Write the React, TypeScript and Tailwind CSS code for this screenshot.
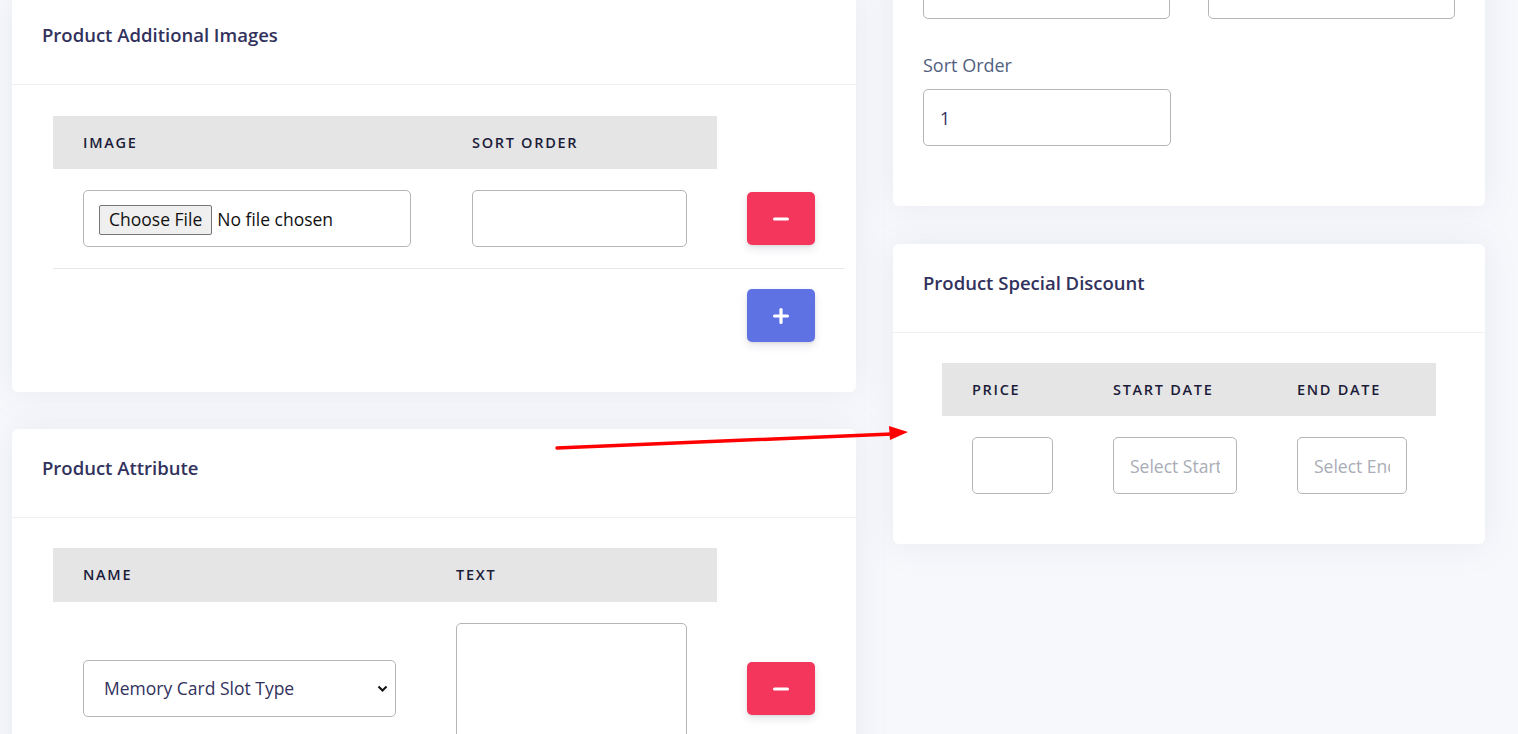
import { Minus, Plus } from 'lucide-react';

const inputCls =
  'block h-[57px] rounded-[5px] border border-[#b5b5b5] bg-white px-4 text-[17.5px] text-[#32325d] outline-none placeholder:text-[#a8adb6]';

function CardHeader({ title }: { title: string }) {
  return (
    <div className="border-b border-[#eef0f4] px-[30px] pt-[25px] pb-[35px]">
      <h3 className="text-[18.5px] leading-[28px] font-semibold text-[#32325d]">{title}</h3>
    </div>
  );
}

function Th({ children, gray = true, className = '' }: { children?: React.ReactNode; gray?: boolean; className?: string }) {
  return (
    <div
      className={`flex h-[53px] items-center pl-[30px] text-[14.5px] font-semibold uppercase tracking-[1.7px] text-[#1c1c3a] ${gray ? 'bg-[#e5e5e5]' : 'bg-white'} ${className}`}
    >
      {children}
    </div>
  );
}

function RemoveBtn() {
  return (
    <button className="flex h-[53px] w-[68px] items-center justify-center rounded-[5px] bg-[#f5365c] text-white shadow-[0_4px_8px_rgba(50,50,93,0.12),0_1px_3px_rgba(0,0,0,0.08)]">
      <Minus className="h-[22px] w-[22px]" strokeWidth={3.5} />
    </button>
  );
}

function AddBtn() {
  return (
    <button className="flex h-[53px] w-[68px] items-center justify-center rounded-[5px] bg-[#5e72e4] text-white shadow-[0_4px_8px_rgba(50,50,93,0.12),0_1px_3px_rgba(0,0,0,0.08)]">
      <Plus className="h-[22px] w-[22px]" strokeWidth={3.5} />
    </button>
  );
}

export default function App() {
  return (
    <div
      className="relative h-[734px] overflow-hidden bg-[#f7f8fc]"
      style={{ fontFamily: '"Open Sans", "Liberation Sans", sans-serif' }}
    >
      <div className="flex items-start gap-[37px] pl-[12px]">
        {/* left column */}
        <div className="-mt-[4px] flex w-[844px] flex-col gap-[37px]">
          <div className="rounded-[6px] bg-white shadow-[0_0_32px_0_rgba(136,152,170,0.15)]">
            <CardHeader title="Product Additional Images" />
            <div className="pt-[31px] pb-[50px] pl-[41px] pr-[12px]">
              <div className="grid grid-cols-[389px_275px_127px]">
                <Th>Image</Th>
                <Th>Sort Order</Th>
                <Th gray={false} />
              </div>
              <div className="grid grid-cols-[389px_275px_127px] items-center border-b border-[#e6e7ea] py-[21px]">
                <div className="pl-[30px]">
                  <div className="flex h-[57px] w-[328px] items-center rounded-[5px] border border-[#b5b5b5] pt-[2px] pl-[15px]">
                    <span className="flex h-[30px] items-center rounded-[2px] border border-[#767676] bg-[#efefef] px-[9px] text-[17.5px] text-[#111]">
                      Choose File
                    </span>
                    <span className="ml-[5px] text-[17.5px] text-[#111]">No file chosen</span>
                  </div>
                </div>
                <div className="pl-[30px]">
                  <input type="text" className={`${inputCls} w-[215px]`} />
                </div>
                <div className="pl-[30px]">
                  <RemoveBtn />
                </div>
              </div>
              <div className="grid grid-cols-[389px_275px_127px] pt-[20px]">
                <div />
                <div />
                <div className="pl-[30px]">
                  <AddBtn />
                </div>
              </div>
            </div>
          </div>

          <div className="rounded-[6px] bg-white shadow-[0_0_32px_0_rgba(136,152,170,0.15)]">
            <CardHeader title="Product Attribute" />
            <div className="pt-[30px] pb-[29px] pl-[41px] pr-[12px]">
              <div className="grid grid-cols-[373px_291px_127px]">
                <Th className="h-[54px]">Name</Th>
                <Th className="h-[54px]">Text</Th>
                <Th gray={false} className="h-[54px]" />
              </div>
              <div className="grid grid-cols-[373px_291px_127px] items-center py-[21px]">
                <div className="pl-[30px]">
                  <div className="relative w-[313px]">
                    <select
                      defaultValue="mcst"
                      className={`${inputCls} w-full appearance-none pl-[20px]`}
                    >
                      <option value="mcst">Memory Card Slot Type</option>
                    </select>
                    <svg
                      className="pointer-events-none absolute top-[25px] right-[8px] h-[8px] w-[11px]"
                      viewBox="0 0 11 8"
                      fill="none"
                      stroke="#111"
                      strokeWidth="2"
                    >
                      <path d="M1.5 1.5 5.5 5.5 9.5 1.5" />
                    </svg>
                  </div>
                </div>
                <div className="pl-[30px]">
                  <textarea className="block h-[131px] w-[231px] resize-none rounded-[5px] border border-[#b5b5b5] bg-white outline-none" />
                </div>
                <div className="pl-[30px]">
                  <RemoveBtn />
                </div>
              </div>
            </div>
          </div>
        </div>

        {/* right column */}
        <div className="-mt-[104px] flex w-[592px] flex-col gap-[38px]">
          <div className="rounded-[6px] bg-white px-[30px] pt-[30px] pb-[60px] shadow-[0_0_32px_0_rgba(136,152,170,0.15)]">
            {/* fields above the fold: labels scrolled out of view */}
            <div className="grid grid-cols-2 gap-[38px]">
              <div>
                <div className="mb-[12px] h-[24px]" />
                <input type="text" className={`${inputCls} w-full`} />
              </div>
              <div>
                <div className="mb-[12px] h-[24px]" />
                <input type="text" className={`${inputCls} w-full`} />
              </div>
            </div>
            <div className="mt-[34px]">
              <label className="mb-[12px] block h-[24px] text-[18px] leading-[24px] text-[#525f7f]">
                Sort Order
              </label>
              <input type="text" defaultValue="1" className={`${inputCls} w-[248px] text-[#3a3a3a]`} />
            </div>
          </div>

          <div className="rounded-[6px] bg-white shadow-[0_0_32px_0_rgba(136,152,170,0.15)]">
            <CardHeader title="Product Special Discount" />
            <div className="px-[49px] pt-[30px] pb-[50px]">
              <div className="grid grid-cols-[141px_184px_169px]">
                <Th>Price</Th>
                <Th>Start Date</Th>
                <Th>End Date</Th>
              </div>
              <div className="grid grid-cols-[141px_184px_169px] pt-[21px]">
                <div className="pl-[30px]">
                  <input type="text" className={`${inputCls} w-[81px]`} />
                </div>
                <div className="pl-[30px]">
                  <input type="text" placeholder="Select Start Date" className={`${inputCls} w-[124px]`} />
                </div>
                <div className="pl-[30px]">
                  <input type="text" placeholder="Select End Date" className={`${inputCls} w-[110px]`} />
                </div>
              </div>
            </div>
          </div>
        </div>
      </div>

      {/* annotation arrow */}
      <svg className="pointer-events-none absolute top-0 left-0 h-[734px] w-[1518px]" viewBox="0 0 1518 734">
        <line x1="557" y1="448" x2="892" y2="434" stroke="#ff0000" strokeWidth="3.5" strokeLinecap="round" />
        <polygon points="908,432 889,426 890,440" fill="#ff0000" />
      </svg>
    </div>
  );
}
